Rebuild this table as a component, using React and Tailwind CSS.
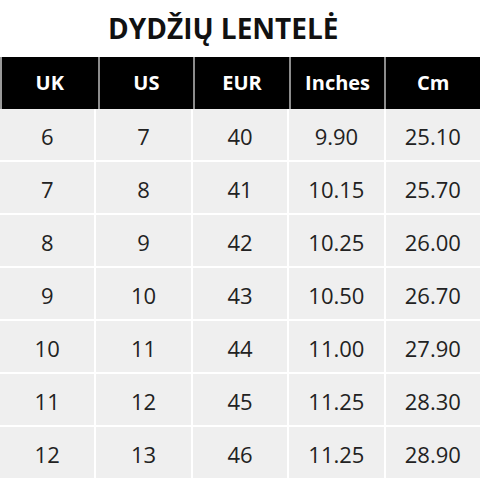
const headers = ['UK', 'US', 'EUR', 'Inches', 'Cm'];

const rows = [
  ['6', '7', '40', '9.90', '25.10'],
  ['7', '8', '41', '10.15', '25.70'],
  ['8', '9', '42', '10.25', '26.00'],
  ['9', '10', '43', '10.50', '26.70'],
  ['10', '11', '44', '11.00', '27.90'],
  ['11', '12', '45', '11.25', '28.30'],
  ['12', '13', '46', '11.25', '28.90'],
];

const App = () => {
  return (
    <div
      className="w-[480px] h-[480px] bg-white overflow-hidden"
      style={{ fontFamily: '"Open Sans", "DejaVu Sans", sans-serif' }}
    >
      {/* Title */}
      <div className="h-[57px] pl-[108px] pt-[11px]">
        <h1 className="text-[28px] leading-[34px] font-bold text-[#111]">
          DYDŽIŲ LENTELĖ
        </h1>
      </div>

      {/* Header */}
      <div className="grid grid-cols-5 h-[52px] bg-black border-l-2 border-[#9a9a9a]">
        {headers.map((h, i) => (
          <div
            key={h}
            className={`flex items-center justify-center text-white font-bold text-[20px] ${
              i > 0 ? 'border-l-2 border-[#8c8c8c]' : ''
            }`}
          >
            {h}
          </div>
        ))}
      </div>

      {/* Body */}
      <div className="grid grid-cols-5 gap-[2px] bg-white">
        {rows.map((row, r) =>
          row.map((cell, c) => (
            <div
              key={`${r}-${c}`}
              className="h-[51px] bg-[#efefef] flex items-center justify-center pt-[3px] text-[22px] text-[#222]"
            >
              {cell}
            </div>
          ))
        )}
      </div>
    </div>
  );
};

export default App;
